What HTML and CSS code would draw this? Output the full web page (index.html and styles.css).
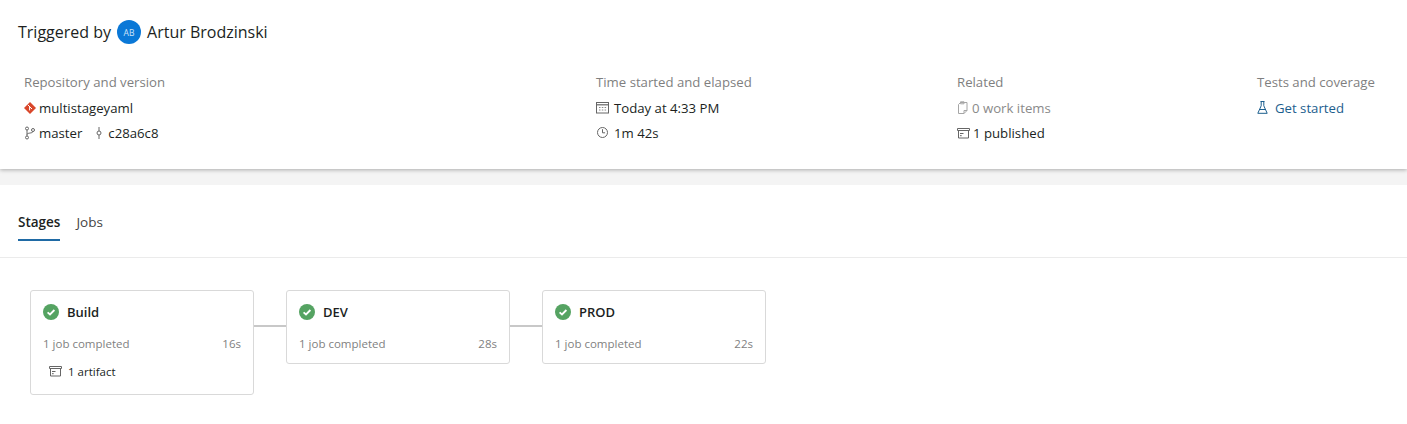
FILE: index.html
```html
<!DOCTYPE html>
<html lang="en">
<head>
    <meta charset="UTF-8">
    <title>Pipeline run summary</title>
    <link rel="stylesheet" href="styles.css">
</head>
<body>
    <header class="summary">
        <div class="trigger">
            <span>Triggered by</span>
            <span class="avatar">AB</span>
            <span>Artur Brodzinski</span>
        </div>
        <div class="details">
            <section class="col">
                <div class="col-title">Repository and version</div>
                <div class="row">
                    <svg class="icon repo" width="12" height="12" viewBox="0 0 12 12"><path d="M6 0 12 6 6 12 0 6Z" fill="#d9472b"/><path d="M3.800 2.800 8 7M5.600 4.600V8.400" stroke="#fff" stroke-width="1" fill="none"/></svg>
                    <span>multistageyaml</span>
                </div>
                <div class="row">
                    <svg class="icon" width="12" height="14" viewBox="0 0 12 14"><g fill="none" stroke="#666" stroke-width="1"><circle cx="3" cy="2.500" r="1.500"/><circle cx="3" cy="11.500" r="1.500"/><circle cx="9" cy="4" r="1.500"/><path d="M3 4v6M3 8.500c0-2 5.500-.8 6-3"/></g></svg>
                    <span>master</span>
                    <svg class="icon commit" width="8" height="14" viewBox="0 0 8 14"><g fill="none" stroke="#666" stroke-width="1"><circle cx="4" cy="7" r="2"/><path d="M4 1v4M4 9v4"/></g></svg>
                    <span>c28a6c8</span>
                </div>
            </section>
            <section class="col">
                <div class="col-title">Time started and elapsed</div>
                <div class="row">
                    <svg class="icon wide" width="13" height="13" viewBox="0 0 13 13"><g fill="none" stroke="#666" stroke-width="1"><rect x="0.500" y="1.500" width="12" height="10.500"/><path d="M0.500 3.800h12" stroke-width="1.200"/><path d="M3 6.500h1.500M5.800 6.500h1.500M8.600 6.500h1.500M3 9h1.500M5.800 9h1.500M8.600 9h1.500" stroke="#888"/></g></svg>
                    <span>Today at 4:33 PM</span>
                </div>
                <div class="row">
                    <svg class="icon wide" width="13" height="13" viewBox="0 0 13 13"><g fill="none" stroke="#666" stroke-width="1"><circle cx="6.500" cy="6.500" r="5"/><path d="M6.500 3.200v3.600h2.600"/></g></svg>
                    <span>1m 42s</span>
                </div>
            </section>
            <section class="col">
                <div class="col-title">Related</div>
                <div class="row muted">
                    <svg class="icon" width="12" height="13" viewBox="0 0 12 13"><path d="M3.500 1.500h6.500v8l-3 3h-5.500v-9zM3.500 .8h3.500v2h-3.500zM7 12.500v-3h3" fill="none" stroke="#a6a6a6"/></svg>
                    <span>0 work items</span>
                </div>
                <div class="row">
                    <svg class="icon" width="13" height="12" viewBox="0 0 13 12"><use href="#artifact"/></svg>
                    <span>1 published</span>
                </div>
            </section>
            <section class="col">
                <div class="col-title">Tests and coverage</div>
                <div class="row link">
                    <svg class="icon wide" width="11" height="13" viewBox="0 0 11 13"><path d="M3.500 .5h4M4.200 .5v4.300L.8 12.300h9.400L6.800 4.800V.5M2.500 8.500h6" fill="none" stroke="#1b5e8e"/></svg>
                    <span>Get started</span>
                </div>
            </section>
        </div>
    </header>
    <div class="band"></div>
    <nav class="tabs">
        <span class="tab active">Stages</span>
        <span class="tab">Jobs</span>
    </nav>
    <main class="stages">
        <article class="stage">
            <h3 class="stage-name">
                <svg class="check" width="16" height="16" viewBox="0 0 16 16"><use href="#check"/></svg>
                Build
            </h3>
            <div class="stage-info"><span>1 job completed</span><span>16s</span></div>
            <div class="stage-artifact">
                <svg width="13" height="12" viewBox="0 0 13 12"><use href="#artifact"/></svg>
                <span>1 artifact</span>
            </div>
        </article>
        <div class="link-line"></div>
        <article class="stage">
            <h3 class="stage-name">
                <svg class="check" width="16" height="16" viewBox="0 0 16 16"><use href="#check"/></svg>
                DEV
            </h3>
            <div class="stage-info"><span>1 job completed</span><span>28s</span></div>
        </article>
        <div class="link-line"></div>
        <article class="stage">
            <h3 class="stage-name">
                <svg class="check" width="16" height="16" viewBox="0 0 16 16"><use href="#check"/></svg>
                PROD
            </h3>
            <div class="stage-info"><span>1 job completed</span><span>22s</span></div>
        </article>
    </main>
    <svg class="defs" width="0" height="0">
        <symbol id="check" viewBox="0 0 16 16">
            <circle cx="8" cy="8" r="8" fill="#55a362"/>
            <path d="M4.600 8.300 7 10.500 11.400 6" fill="none" stroke="#fff" stroke-width="1.800"/>
        </symbol>
        <symbol id="artifact" viewBox="0 0 13 12">
            <path d="M.5 1.500h12v2H.5zM1.500 3.500V11h10V3.500M3 6.500h3.500M3 8.700h1.700" fill="none" stroke="#666"/>
        </symbol>
    </svg>
</body>
</html>
```

FILE: styles.css
```css
body {
    font-family: 'Open Sans', 'Noto Sans', Arial, sans-serif;
    font-size: 13.2px;
    color: #201f1e;
    background: #fff;
    margin: 0;
    padding: 0;
}
.summary {
    height: 169px;
    box-sizing: border-box;
    padding: 20px 0 0 18px;
    box-shadow: 0 1px 4px rgba(0,0,0,0.3);
    position: relative;
}
.trigger {
    display: flex;
    align-items: center;
    gap: 6px;
    height: 24px;
    font-size: 16px;
}
.avatar {
    width: 24px;
    height: 24px;
    border-radius: 50%;
    background: #0a78d7;
    color: #cfe4f7;
    font-size: 8.5px;
    display: flex;
    align-items: center;
    justify-content: center;
}
.details {
    display: grid;
    grid-template-columns: 572px 361px 300px auto;
    margin: 26px 0 0 6px;
}
.col-title {
    color: #7f7f7f;
    height: 25px;
    line-height: 25px;
}
.row {
    display: flex;
    align-items: center;
    height: 25px;
}
.icon {
    margin-right: 3px;
    flex: none;
}
.icon.wide {
    margin-right: 5px;
}
.icon.commit {
    margin: 0 5px 0 13px;
}
.link .icon.wide {
    margin-right: 7px;
}
.muted {
    color: #8a8a8a;
}
.link {
    color: #1b5e8e;
}
.band {
    height: 16px;
    background: #f4f4f4;
}
.tabs {
    display: flex;
    gap: 16px;
    height: 73px;
    box-sizing: border-box;
    padding: 0 0 0 18px;
    border-bottom: 1px solid #ebebeb;
    font-size: 13.5px;
}
.tab {
    padding-top: 28px;
    height: 56px;
    box-sizing: border-box;
    color: #444;
}
.tab.active {
    color: #201f1e;
    font-weight: 600;
    border-bottom: 2px solid #1f6aa5;
}
.stages {
    display: flex;
    align-items: flex-start;
    padding: 32px 0 0 30px;
}
.stage {
    width: 224px;
    box-sizing: border-box;
    border: 1px solid #d9d9d9;
    border-radius: 3px;
    padding: 11px 12px 0;
    min-height: 74px;
}
.stage:first-child {
    height: 105px;
}
.stage-name {
    display: flex;
    align-items: center;
    gap: 8px;
    margin: 0;
    height: 20px;
    font-size: 13px;
    font-weight: 600;
}
.stage-info {
    display: flex;
    justify-content: space-between;
    margin-top: 13px;
    height: 18px;
    line-height: 18px;
    font-size: 11.5px;
    color: #7f7f7f;
}
.stage-artifact {
    display: flex;
    align-items: center;
    gap: 6px;
    margin: 9px 0 0 6px;
    height: 18px;
    font-size: 11.5px;
}
.link-line {
    width: 32px;
    height: 2px;
    margin-top: 35px;
    background: #c8c8c8;
}
.defs {
    position: absolute;
}
```
